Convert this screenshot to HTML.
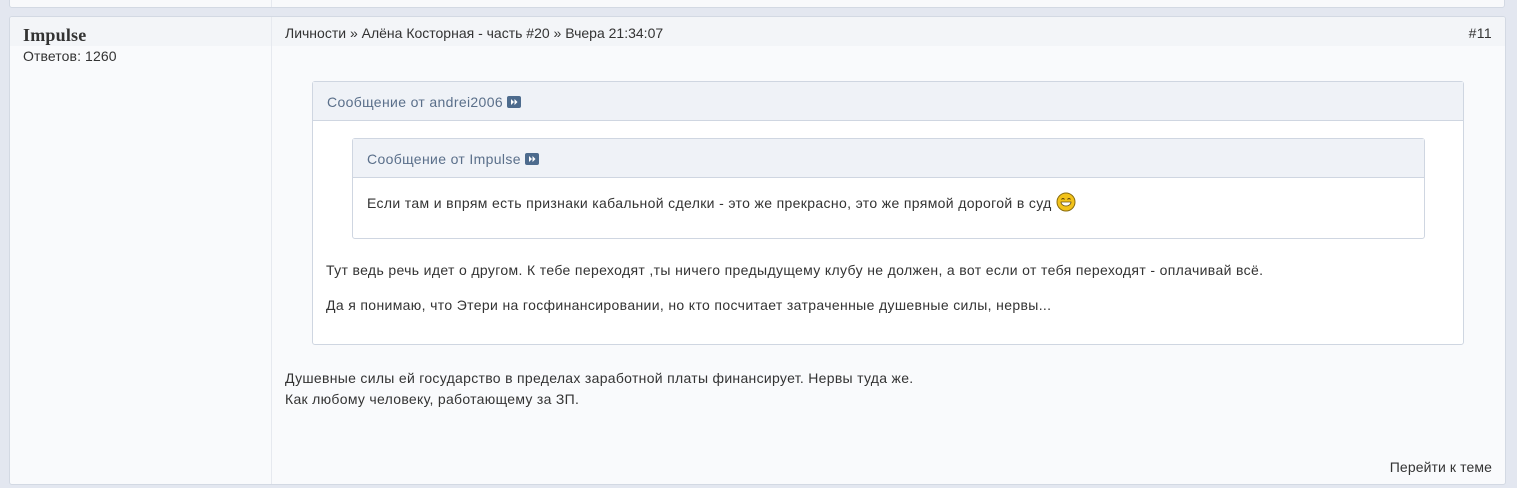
<!DOCTYPE html>
<html><head><meta charset="utf-8"><style>
body{margin:0;width:1517px;height:488px;background:#e3e7f0;font-family:"Liberation Sans",sans-serif;font-size:14px;letter-spacing:0.35px;color:#333;position:relative;overflow:hidden}
.top{position:absolute;left:9px;top:-10px;width:1496px;height:18px;background:#f8f9fb;border:1px solid #d3d9e3;border-radius:3px;box-sizing:border-box}
.top .d{position:absolute;left:261px;top:0;bottom:0;border-left:1px solid #e6e9ef}
.card{position:absolute;left:9px;top:16px;width:1497px;height:469px;background:#f9fafc;border:1px solid #d3d9e3;border-radius:3px;box-sizing:border-box;overflow:hidden}
.band{position:absolute;left:0;right:0;top:0;height:29px;background:#f3f5f8}
.lc{position:absolute;left:0;top:0;width:261px;bottom:0;border-right:1px solid #e6e9ef}
.a{position:absolute;white-space:nowrap}
.q{position:absolute;background:#fff;border:1px solid #cfd6e1;border-radius:3px;box-sizing:border-box}
.qh{height:38px;background:#eff2f7;border-bottom:1px solid #cfd6e1;color:#5a6f8a;line-height:40px;padding-left:14px}
svg.ic{vertical-align:-1px;margin-left:4px}
</style></head><body>
<div class="top"><div class="d"></div></div>
<div class="card">
<div class="band"></div>
<div class="lc"></div>
<div class="a" style="left:13px;top:8px;font-weight:bold;font-size:18px;letter-spacing:0.2px;color:#333;font-family:'Liberation Serif',serif">Impulse</div>
<div class="a" style="left:13px;top:31px;letter-spacing:0.1px">Ответов: 1260</div>
<div class="a" style="left:275px;top:8px;letter-spacing:0px">Личности » Алёна Косторная - часть #20 » Вчера 21:34:07</div>
<div class="a" style="right:13px;top:8px">#11</div>
<div class="a" style="left:275px;top:351px;line-height:21px;letter-spacing:0.3px">Душевные силы ей государство в пределах заработной платы финансирует. Нервы туда же.<br>Как любому человеку, работающему за ЗП.</div>
<div class="a" style="right:13px;top:442px;letter-spacing:0.1px">Перейти к теме</div>
</div>
<div class="q" style="left:312px;top:81px;width:1152px;height:264px">
<div class="qh">Сообщение от andrei2006<svg class="ic" width="14" height="12" viewBox="0 0 14 12"><rect width="14" height="12" rx="2" fill="#4d6b8d"/><path d="M4 3l3 3-3 3zM7.5 3l3 3-3 3z" fill="#fff"/></svg></div>
</div>
<div class="q" style="left:352px;top:138px;width:1073px;height:101px">
<div class="qh">Сообщение от Impulse<svg class="ic" width="14" height="12" viewBox="0 0 14 12"><rect width="14" height="12" rx="2" fill="#4d6b8d"/><path d="M4 3l3 3-3 3zM7.5 3l3 3-3 3z" fill="#fff"/></svg></div>
<div class="a" style="left:14px;top:53px">Если там и впрям есть признаки кабальной сделки - это же прекрасно, это же прямой дорогой в суд <svg width="20" height="20" viewBox="0 0 20 20" style="vertical-align:-4px"><circle cx="10" cy="10" r="9" fill="#f2c21a" stroke="#8a6d10"/><path d="M5 10h10a5 4 0 0 1-10 0z" fill="#fff" stroke="#6a5010" stroke-width="0.8"/><path d="M5.5 7.5q1.5-2 3 0M11.5 7.5q1.5-2 3 0" stroke="#5a4008" fill="none"/></svg></div>
</div>
<div class="a" style="left:326px;top:262px">Тут ведь речь идет о другом. К тебе переходят ,ты ничего предыдущему клубу не должен, а вот если от тебя переходят - оплачивай всё.</div>
<div class="a" style="left:326px;top:297px">Да я понимаю, что Этери на госфинансировании, но кто посчитает затраченные душевные силы, нервы...</div>
</body></html>
